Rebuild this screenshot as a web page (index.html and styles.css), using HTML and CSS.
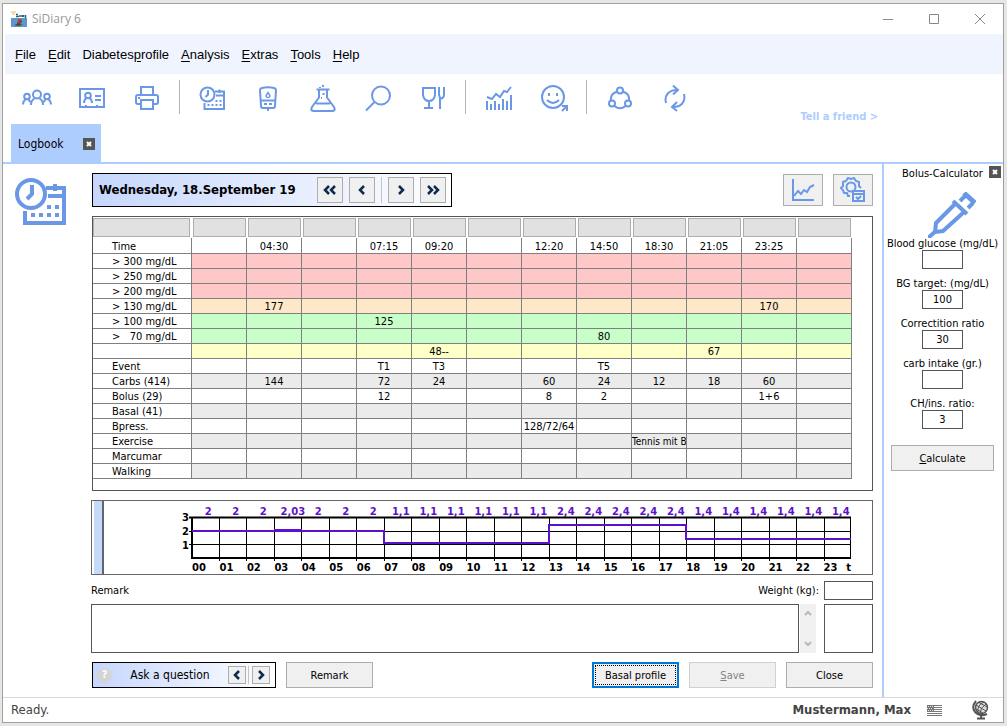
FILE: index.html
```html
<!DOCTYPE html>
<html lang="en">
  <head>
    <meta charset="UTF-8" />
    <meta name="viewport" content="width=device-width, initial-scale=1.0" />
    <title>SiDiary 6</title>
    <link rel="stylesheet" href="styles.css" />
  </head>

  <body>
    <div class="window">
      <header class="titlebar">
        <svg class="app-icon" width="16" height="16" viewBox="0 0 16 16">
          <path d="M0 1h5M1 3h3" stroke="#f5b55e" />
          <path d="M5 3.5h2M5 5.5h3M9 4v2M11 4v2M12.500 4v2M14.500 4v3" stroke="#2b6473" stroke-width="1.500" />
          <rect y="7" width="16" height="9" fill="#5c98cf" />
          <path d="M3 14l3-1 1-4 3-1 1 3-2 2 3 1-5 1z" fill="#4b4a35" />
          <path d="M7 8l3 0-1 4-2 0z" fill="#d8332c" />
        </svg>
        <span class="app-name">SiDiary 6</span>
        <div class="window-buttons">
          <button aria-label="Minimize"><svg width="12" height="12" viewBox="0 0 12 12"><path d="M1 6.500h10" /></svg></button>
          <button aria-label="Maximize"><svg width="12" height="12" viewBox="0 0 12 12"><path d="M1.500 1.500h9v9h-9z" /></svg></button>
          <button aria-label="Close window"><svg width="12" height="12" viewBox="0 0 12 12"><path d="M1 1l10 10M11 1L1 11" /></svg></button>
        </div>
      </header>

      <nav class="menu">
        <a href="#"><u>F</u>ile</a>
        <a href="#"><u>E</u>dit</a>
        <a href="#">Diabetes<u>p</u>rofile</a>
        <a href="#"><u>A</u>nalysis</a>
        <a href="#"><u>E</u>xtras</a>
        <a href="#"><u>T</u>ools</a>
        <a href="#"><u>H</u>elp</a>
      </nav>

      <div class="toolbar">
        <button aria-label="Users">
          <svg width="30" height="18" viewBox="0 0 30 18">
            <circle cx="15" cy="5.500" r="4" />
            <path d="M9 16c0-3 1-5 3.500-6.500M21 16c0-3-1-5-3.500-6.500" />
            <circle cx="5" cy="7.500" r="2.800" />
            <path d="M1 15.500c0-3 1-4 2.500-5M8.500 13.500c-.5-1.500-1-2-2-3" />
            <circle cx="25" cy="7.500" r="2.800" />
            <path d="M29 15.500c0-3-1-4-2.500-5M21.500 13.500c.5-1.500 1-2 2-3" />
          </svg>
        </button>
        <button aria-label="Profile">
          <svg width="26" height="20" viewBox="0 0 26 20">
            <path d="M1 1h24v18H1z" />
            <circle cx="9" cy="7.500" r="2.800" />
            <path d="M5 15c0-3 1-4 2.500-5M13 15c0-3-1-4-2.500-5M16 8h6M16 12h6" />
            <path d="M6 17.500h2M17 17.500h2" stroke-width="1" />
          </svg>
        </button>
        <button aria-label="Print">
          <svg width="24" height="24" viewBox="0 0 24 24">
            <path d="M6 9V1h12v8" />
            <path d="M6 18H3q-2 0-2-2v-5q0-2 2-2h18q2 0 2 2v5q0 2-2 2h-3" />
            <path d="M6 14h12v9H6zM3 12h2" />
          </svg>
        </button>
        <span class="separator"></span>
        <button aria-label="Logbook">
          <svg width="27" height="25" viewBox="0 0 54 50" stroke-width="4">
            <use href="#logbook" />
          </svg>
        </button>
        <button aria-label="Glucose meter">
          <svg width="20" height="25" viewBox="0 0 20 25">
            <path d="M4 2q6-1.500 12 0 2 .5 2 2l-1 16q0 2-2 2H5q-2 0-2-2L2 4q0-1.500 2-2zM2.500 14.500h15M6 18h3M11 18h3M10 22v3" />
            <path d="M10 6.500c-3 4-2 5 0 5s3-1 0-5z" stroke-width="1.500" />
          </svg>
        </button>
        <button aria-label="Laboratory">
          <svg width="26" height="28" viewBox="0 0 26 28">
            <path d="M6.500 5.500h13M9 5.500v8L2 23q-2 4 2 4h18q4 0 2-4l-7-9.500v-8M6 19.500h14" />
            <path d="M13 1v2M10 3v1M13.500 9v2M11 14h1" />
          </svg>
        </button>
        <button aria-label="Search">
          <svg width="26" height="27" viewBox="0 0 26 27">
            <circle cx="16" cy="10.500" r="9" />
            <path d="M9.500 17L1 25.500" />
          </svg>
        </button>
        <button aria-label="Food">
          <svg width="24" height="24" viewBox="0 0 24 24">
            <path d="M2 2h12v7q-1 6-6 6T2 9zM8 15v7M3 22h9M18 1v8q1 2 1 4v10M23 1v8q0 3-4 4" />
          </svg>
        </button>
        <span class="separator"></span>
        <button aria-label="Statistics">
          <svg width="28" height="26" viewBox="0 0 28 26">
            <path d="M2 12l5 2 4-5 4 3 4-6 3 1 4-5" />
            <path d="M2 16v9M6 19v6M10 16v9M14 19v6M18 14v11M22 16v9M26 10v15" />
          </svg>
        </button>
        <button aria-label="Mood">
          <svg width="28" height="28" viewBox="0 0 28 28">
            <circle cx="13" cy="13" r="11" />
            <path d="M7 16q6 6 12 0M9 9v3M17 9v3M22 27l5-5M22 22h5v5" />
          </svg>
        </button>
        <span class="separator"></span>
        <button aria-label="Share">
          <svg width="26" height="24" viewBox="0 0 26 24">
            <circle cx="13" cy="4.500" r="3" />
            <circle cx="5" cy="17.500" r="3" />
            <circle cx="21" cy="17.500" r="3" />
            <path d="M10 5.500Q3 8 4 14.500M16 5.500q7 2.500 6 9M7.500 20q5.500 4.500 11 0" />
          </svg>
        </button>
        <button aria-label="Synchronize">
          <svg width="22" height="28" viewBox="0 0 22 28">
            <path d="M2 19C0 11 5 6 13 6M9 1.500l5 4.500-5 4.500M20 10c2 8-3 13-11 13M13 18l-5 5 5 4" />
          </svg>
        </button>
        <a class="tell" href="#">Tell a friend &gt;</a>
      </div>

      <div class="tabs">
        <div class="tab">
          Logbook
          <button class="close" aria-label="Close tab"><svg width="8" height="8" viewBox="0 0 8 8"><path d="M2 2l4 4M6 2L2 6" /></svg></button>
        </div>
      </div>

      <div class="main">
        <div class="side-icon">
          <svg width="54" height="50" viewBox="0 0 54 50" stroke-width="4">
            <g id="logbook">
              <path d="M32 11h18v35H11V34M34 19h16M41 7v7" />
              <circle cx="17" cy="17" r="14" />
              <path d="M18 8v9l-5 5" />
              <path d="M17 38h28" stroke-dasharray="4 4" />
              <path d="M33 30h12" stroke-dasharray="4 4" />
            </g>
          </svg>
        </div>

        <main class="content">
          <div class="top-row">
            <div class="date-bar">
              <h1>Wednesday, 18.September 19</h1>
              <button class="step" aria-label="Week back"><svg width="14" height="10" viewBox="0 0 14 10"><path d="M6 1L2 5l4 4M12 1L8 5l4 4" /></svg></button>
              <button class="step" aria-label="Day back"><svg width="8" height="10" viewBox="0 0 8 10"><path d="M6 1L2 5l4 4" /></svg></button>
              <span class="divider"></span>
              <button class="step" aria-label="Day forward"><svg width="8" height="10" viewBox="0 0 8 10"><path d="M2 1l4 4-4 4" /></svg></button>
              <button class="step" aria-label="Week forward"><svg width="14" height="10" viewBox="0 0 14 10"><path d="M2 1l4 4-4 4M8 1l4 4-4 4" /></svg></button>
            </div>
            <button class="view" aria-label="Chart">
              <svg width="24" height="24" viewBox="0 0 24 24"><path d="M2 1v21h21" /><path d="M3 18l4-5 3 3 3-4 3 2 3-5 4-2" /></svg>
            </button>
            <button class="view" aria-label="Settings">
              <svg width="26" height="26" viewBox="0 0 26 26">
                <path d="M10 19H8l-1-3-3 0-1-3-2-2 2-2 0-4 3-1 2-3 3 1 3-1 2 3 3 1 0 4 2 2" />
                <circle cx="11" cy="10" r="4.500" />
                <path d="M13 14h11v10H13zM13 17h11M16 20l2 2 3-3" />
              </svg>
            </button>
          </div>

          <div class="log-panel">
            <table class="log">
              <thead>
                <tr>
                  <td><div></div></td><td><div></div></td><td><div></div></td><td><div></div></td><td><div></div></td><td><div></div></td><td><div></div></td><td><div></div></td><td><div></div></td><td><div></div></td><td><div></div></td><td><div></div></td><td><div></div></td>
                </tr>
              </thead>
              <tbody>
                <tr class="time"><th>Time</th><td></td><td>04:30</td><td></td><td>07:15</td><td>09:20</td><td></td><td>12:20</td><td>14:50</td><td>18:30</td><td>21:05</td><td>23:25</td><td></td></tr>
                <tr class="red"><th>&gt; 300 mg/dL</th><td></td><td></td><td></td><td></td><td></td><td></td><td></td><td></td><td></td><td></td><td></td><td></td></tr>
                <tr class="red"><th>&gt; 250 mg/dL</th><td></td><td></td><td></td><td></td><td></td><td></td><td></td><td></td><td></td><td></td><td></td><td></td></tr>
                <tr class="red"><th>&gt; 200 mg/dL</th><td></td><td></td><td></td><td></td><td></td><td></td><td></td><td></td><td></td><td></td><td></td><td></td></tr>
                <tr class="orange"><th>&gt; 130 mg/dL</th><td></td><td>177</td><td></td><td></td><td></td><td></td><td></td><td></td><td></td><td></td><td>170</td><td></td></tr>
                <tr class="green"><th>&gt; 100 mg/dL</th><td></td><td></td><td></td><td>125</td><td></td><td></td><td></td><td></td><td></td><td></td><td></td><td></td></tr>
                <tr class="green"><th>&gt; &nbsp; 70 mg/dL</th><td></td><td></td><td></td><td></td><td></td><td></td><td></td><td>80</td><td></td><td></td><td></td><td></td></tr>
                <tr class="yellow"><th></th><td></td><td></td><td></td><td></td><td>48--</td><td></td><td></td><td></td><td></td><td>67</td><td></td><td></td></tr>
                <tr><th>Event</th><td></td><td></td><td></td><td>T1</td><td>T3</td><td></td><td></td><td>T5</td><td></td><td></td><td></td><td></td></tr>
                <tr class="gray"><th>Carbs (414)</th><td></td><td>144</td><td></td><td>72</td><td>24</td><td></td><td>60</td><td>24</td><td>12</td><td>18</td><td>60</td><td></td></tr>
                <tr><th>Bolus (29)</th><td></td><td></td><td></td><td>12</td><td></td><td></td><td>8</td><td>2</td><td></td><td></td><td>1+6</td><td></td></tr>
                <tr class="gray"><th>Basal (41)</th><td></td><td></td><td></td><td></td><td></td><td></td><td></td><td></td><td></td><td></td><td></td><td></td></tr>
                <tr><th>Bpress.</th><td></td><td></td><td></td><td></td><td></td><td></td><td>128/72/64</td><td></td><td></td><td></td><td></td><td></td></tr>
                <tr class="gray"><th>Exercise</th><td></td><td></td><td></td><td></td><td></td><td></td><td></td><td></td><td class="long">Tennis mit B</td><td></td><td></td><td></td></tr>
                <tr><th>Marcumar</th><td></td><td></td><td></td><td></td><td></td><td></td><td></td><td></td><td></td><td></td><td></td><td></td></tr>
                <tr class="gray"><th>Walking</th><td></td><td></td><td></td><td></td><td></td><td></td><td></td><td></td><td></td><td></td><td></td><td></td></tr>
              </tbody>
            </table>
          </div>

          <div class="basal">
            <div class="handle"></div>
            <div class="scale"><span>3</span><span>2</span><span>1</span></div>
            <div class="chart">
              <div class="rates">
                <span>2</span><span>2</span><span>2</span><span>2,03</span><span>2</span><span>2</span><span>2</span><span>1,1</span><span>1,1</span><span>1,1</span><span>1,1</span><span>1,1</span><span>1,1</span><span>2,4</span><span>2,4</span><span>2,4</span><span>2,4</span><span>2,4</span><span>1,4</span><span>1,4</span><span>1,4</span><span>1,4</span><span>1,4</span><span>1,4</span>
              </div>
              <svg class="plot" viewBox="0 0 660 46" preserveAspectRatio="none">
                <path class="grid" d="M28.500 1v44M55.500 1v44M83.500 1v44M110.500 1v44M138.500 1v44M165.500 1v44M193.500 1v44M220.500 1v44M248.500 1v44M275.500 1v44M303.500 1v44M330.500 1v44M358.500 1v44M385.500 1v44M413.500 1v44M440.500 1v44M468.500 1v44M495.500 1v44M523.500 1v44M550.500 1v44M578.500 1v44M605.500 1v44M633.500 1v44M659.500 1v42M-2 15.500h662M-2 28.500h662" />
                <path class="frame" d="M-2 1.500h662M1 1v42M0 42h660" />
                <path class="rate" d="M1 15h192v12h165V9h137v14h165M83 14h28" />
              </svg>
              <div class="hours">
                <span>00</span><span>01</span><span>02</span><span>03</span><span>04</span><span>05</span><span>06</span><span>07</span><span>08</span><span>09</span><span>10</span><span>11</span><span>12</span><span>13</span><span>14</span><span>15</span><span>16</span><span>17</span><span>18</span><span>19</span><span>20</span><span>21</span><span>22</span><span class="last">23 <i>t</i></span>
              </div>
            </div>
          </div>

          <div class="remark-head">
            <label for="remark">Remark</label>
            <label class="weight-label" for="weight">Weight (kg):</label>
            <input id="weight" type="text" />
          </div>
          <div class="remark-row">
            <textarea id="remark"></textarea>
            <div class="scrollbar">
              <svg width="8" height="6" viewBox="0 0 8 6"><path d="M1 5l3-3 3 3" /></svg>
              <svg width="8" height="6" viewBox="0 0 8 6"><path d="M1 1l3 3 3-3" /></svg>
            </div>
            <div class="preview"></div>
          </div>

          <div class="actions">
            <div class="ask">
              <span class="help">?</span>
              <span class="ask-text">Ask a question</span>
              <button class="step" aria-label="Previous question"><svg width="8" height="10" viewBox="0 0 8 10"><path d="M6 1L2 5l4 4" /></svg></button>
              <span class="divider"></span>
              <button class="step" aria-label="Next question"><svg width="8" height="10" viewBox="0 0 8 10"><path d="M2 1l4 4-4 4" /></svg></button>
            </div>
            <button class="btn">Remark</button>
            <button class="btn default">Basal profile</button>
            <button class="btn" disabled><u>S</u>ave</button>
            <button class="btn">Close</button>
          </div>
        </main>

        <aside class="bolus">
          <button class="close" aria-label="Close calculator"><svg width="8" height="8" viewBox="0 0 8 8"><path d="M2 2l4 4M6 2L2 6" /></svg></button>
          <h2>Bolus-Calculator</h2>
          <svg class="syringe" width="48" height="46" viewBox="0 0 48 46">
            <path d="M27 12L8 31l-1 9 8-1 21-19" stroke-width="4" />
            <path d="M0 46l8-7M32 9l5-5M40 16l5-5" stroke-width="4" />
            <path d="M25 9l14 13" stroke-width="4" />
            <path d="M36 1l11 10" stroke-width="5" />
          </svg>
          <label for="bg">Blood glucose (mg/dL)</label>
          <input id="bg" type="text" />
          <label for="target">BG target: (mg/dL)</label>
          <input id="target" type="text" value="100" />
          <label for="correction">Correctition ratio</label>
          <input id="correction" type="text" value="30" />
          <label for="carbs">carb intake (gr.)</label>
          <input id="carbs" type="text" />
          <label for="ratio">CH/ins. ratio:</label>
          <input id="ratio" type="text" value="3" />
          <button class="btn"><u>C</u>alculate</button>
        </aside>
      </div>

      <footer class="status">
        <span>Ready.</span>
        <strong>Mustermann, Max</strong>
        <svg class="flag" width="15" height="11" viewBox="0 0 15 11">
          <path d="M0 .5h15M0 2.500h15M0 4.500h15M0 6.500h15M0 8.500h15M0 10.500h15" stroke="#777" />
          <path d="M0 0h7v6H0z" fill="#777" />
          <path d="M1 1.500h6M0 3.500h6M1 5.500h6" stroke="#ddd" stroke-dasharray="1 1" />
        </svg>
        <svg class="globe" width="18" height="20" viewBox="0 0 18 20">
          <circle cx="9.500" cy="7.500" r="6" fill="#ddd" stroke-width="1.500" />
          <path d="M4 5l10 6M6 2l9 5M4 9l7 4M12 2Q5 5 6 12M14 4q-6 4-6 9" />
          <path d="M4 1q-5 6-1 11 5 5 12 2M9 15v3M5 18.500h8" stroke-width="2" />
        </svg>
      </footer>
    </div>
  </body>
</html>
```
FILE: styles.css
```css
* {
  box-sizing: border-box;
}

body {
  margin: 0;
  padding: 3px 3px 3px 2px;
  background: #e6e6e6;
  color: #000;
  font: 11px/14px "DejaVu Sans Condensed", "DejaVu Sans", sans-serif;
}

button,
input,
textarea {
  font: inherit;
  color: inherit;
  margin: 0;
  padding: 0;
}

svg {
  display: block;
  fill: none;
  stroke: #6b98e6;
}

a {
  color: inherit;
  text-decoration: none;
}

.window {
  display: flex;
  flex-direction: column;
  min-height: calc(100vh - 6px);
  border: 1px solid #a0a0a0;
  background: #fff;
}

/* title bar and menu */
.titlebar {
  display: flex;
  align-items: center;
  height: 30px;
  padding-left: 8px;
}

.app-icon,
.flag {
  stroke: none;
}

.app-name {
  margin-left: 5px;
  color: #999;
  font: 12px/16px "Open Sans", sans-serif;
}

.window-buttons {
  display: flex;
  margin-left: auto;
}

.window-buttons button {
  display: grid;
  place-items: center;
  width: 46px;
  height: 30px;
  border: 0;
  background: none;
}

.window-buttons svg {
  stroke: #888;
}

.menu {
  display: flex;
  align-items: center;
  gap: 12px;
  height: 40px;
  margin-left: 2px;
  padding: 2px 0 0 10px;
  background: #f0f4ff;
  font: 13px/16px "Liberation Sans", Arial, sans-serif;
}

.menu a {
  text-underline-offset: 2px;
}

/* toolbar */
.toolbar {
  display: flex;
  height: 50px;
  padding: 0 125px 0 6px;
}

.toolbar button {
  display: grid;
  place-items: center;
  width: 55px;
  height: 48px;
  border: 0;
  background: none;
}

.toolbar svg {
  stroke-width: 2;
}

.toolbar svg[stroke-width="4"] {
  stroke-width: 4;
}

.separator {
  width: 1px;
  height: 34px;
  margin: 6px 5px;
  background: #b4b4b4;
}

.tell {
  align-self: flex-end;
  margin-left: auto;
  color: #aecdff;
  font-weight: bold;
}

.tabs {
  display: flex;
  height: 40px;
  padding-left: 8px;
  border-bottom: 2px solid #aecdff;
}

.tab {
  display: flex;
  align-items: center;
  justify-content: space-between;
  width: 90px;
  padding: 2px 6px 0 7px;
  background: #aecdff;
  font-size: 12px;
}

.close {
  display: grid;
  place-items: center;
  width: 12px;
  height: 12px;
  border: 0;
  background: #555;
}

.close svg {
  stroke: #fff;
  stroke-width: 2;
}

/* main area */
.main {
  display: flex;
  flex: 1;
}

.side-icon {
  width: 88px;
  padding: 13px 0 0 11px;
}

.content {
  flex: 1;
  min-width: 0;
  padding: 9px 9px 9px 0;
}

.top-row {
  display: flex;
  align-items: center;
  gap: 10px;
  margin: 0 0 9px 1px;
}

.date-bar,
.ask {
  display: flex;
  align-items: center;
  border: 1px solid #000;
  background: linear-gradient(to right, #c6d6fd, #fff);
}

.date-bar {
  gap: 6px;
  width: 360px;
  height: 34px;
  margin-right: auto;
  padding: 0 5px 0 6px;
}

.date-bar h1 {
  flex: 1;
  margin: 0;
  font-size: 13px;
  white-space: nowrap;
}

.step {
  display: grid;
  place-items: center;
  width: 26px;
  height: 26px;
  border: 1px solid #adadad;
  background: #f0f0f0;
}

.step svg {
  stroke: #0d2a4f;
  stroke-width: 2.5;
}

.divider {
  width: 1px;
  height: 26px;
  background: #c4c4c4;
}

.view {
  display: grid;
  place-items: center;
  width: 40px;
  height: 32px;
  border: 1px solid #adadad;
  background: #f0f0f0;
}

.view svg {
  stroke-width: 2;
}

.log-panel {
  height: 275px;
  margin: 0 0 9px 1px;
  border: 1px solid #555;
}

.log {
  width: 759px;
  table-layout: fixed;
  border-collapse: separate;
  border-spacing: 0;
}

.log td,
.log th {
  width: 55px;
  height: 15px;
  padding: 2px 0 0;
  overflow: hidden;
  border-right: 1px solid #808080;
  border-bottom: 1px solid #808080;
  line-height: 12px;
  text-align: center;
  white-space: nowrap;
}

.log th {
  padding-left: 19px;
  background: #fff;
  font-weight: normal;
  text-align: left;
}

.log thead td {
  height: 21px;
  padding: 1px 0 1px 1px;
  border: 0;
}

.log thead td:first-child {
  width: 99px;
  padding: 1px 1px 1px 0;
}

.log thead div {
  height: 19px;
  margin-right: 1px;
  border: 1px solid #adadad;
  background: #e1e1e1;
}

.log .time td,
.log .time th {
  height: 16px;
}

.log .long {
  font-size: 10px;
  text-align: left;
}

.red {
  background: #ffc8c8;
}

.orange {
  background: #ffe8c8;
}

.green {
  background: #c8ffc8;
}

.yellow {
  background: #ffffc8;
}

.gray {
  background: #ebebeb;
}

/* basal rate chart */
.basal {
  display: flex;
  height: 75px;
  padding: 0 21px 0 2px;
  border: 1px solid #666;
  font: bold 10px/14px "DejaVu Sans", sans-serif;
}

.handle {
  width: 10px;
  border-right: 2px solid #5f6670;
  background: #c4daf8;
}

.scale {
  display: flex;
  flex-direction: column;
  width: 87px;
  padding: 10px 2px 0 0;
  text-align: right;
}

.chart {
  flex: 1;
  min-width: 0;
}

.rates,
.hours {
  display: grid;
  grid-template-columns: repeat(24, minmax(0, 1fr));
}

.rates {
  height: 15px;
  padding-top: 4px;
  color: #5c12cc;
}

.rates span {
  padding-left: 7px;
  text-align: center;
  white-space: nowrap;
}

.plot {
  width: 100%;
  height: 46px;
  overflow: visible;
}

.grid {
  stroke: #000;
}

.frame {
  stroke: #000;
  stroke-width: 2;
}

.rate {
  stroke: #5c12cc;
  stroke-width: 2;
}

.hours {
  padding-left: 1px;
  line-height: 12px;
}

.hours .last {
  display: flex;
  justify-content: space-between;
}

.hours i {
  font-style: normal;
}

/* remark */
.remark-head {
  display: flex;
  align-items: center;
  margin-top: 6px;
}

.weight-label {
  margin: 0 5px 0 auto;
}

input {
  height: 19px;
  border: 1px solid #555;
  border-radius: 0;
  background: #fff;
}

.remark-head input,
.preview {
  width: 49px;
}

.remark-row {
  display: flex;
  height: 49px;
  margin-top: 4px;
}

.remark-row textarea {
  flex: 1;
  padding: 2px;
  overflow: hidden;
  border: 1px solid #555;
  background: #fff;
  resize: none;
}

.scrollbar {
  display: flex;
  flex-direction: column;
  align-items: center;
  justify-content: space-between;
  width: 16px;
  margin: 0 8px 0 1px;
  padding: 6px 0;
  background: #f0f0f0;
}

.scrollbar svg {
  stroke: #b8b8b8;
  stroke-width: 2;
}

.preview {
  border: 1px solid #555;
}

.actions {
  display: flex;
  gap: 10px;
  margin: 9px 0 0 1px;
}

.ask {
  width: 184px;
  height: 26px;
  padding: 0 5px 0 4px;
}

.help {
  width: 15px;
  height: 15px;
  border-radius: 50%;
  background: #d4d4d4;
  color: #fff;
  font-weight: bold;
  text-align: center;
}

.ask-text {
  flex: 1;
  font-size: 12px;
  text-align: center;
}

.ask .step {
  width: 18px;
  height: 18px;
}

.ask .divider {
  height: 18px;
  margin: 0 3px 0 2px;
}

.btn {
  width: 87px;
  height: 26px;
  padding-top: 2px;
  border: 1px solid #adadad;
  background: #f0f0f0;
}

.btn:disabled {
  border-color: #d0d0d0;
  color: #838383;
}

.default {
  margin-left: auto;
  border: 2px solid #0078d7;
  outline: 1px dotted #000;
  outline-offset: -4px;
}

/* bolus calculator */
.bolus {
  position: relative;
  display: flex;
  flex-direction: column;
  align-items: center;
  width: 121px;
  padding: 3px 2px 0 0;
  border-left: 2px solid #aecdff;
  white-space: nowrap;
}

.bolus h2 {
  margin: 0;
  font-size: 11px;
  font-weight: normal;
}

.bolus .close {
  position: absolute;
  top: 2px;
  right: 2px;
}

.syringe {
  margin: 11px 0 -1px 18px;
}

.bolus input {
  width: 41px;
  margin: -1px 0 8px;
  text-align: center;
}

.bolus .btn {
  width: 103px;
  margin-top: 8px;
}

.status {
  display: flex;
  align-items: center;
  height: 25px;
  padding: 0 13px 0 8px;
  border-top: 1px solid #d9d9d9;
  color: #444;
  font-size: 13px;
}

.status strong {
  margin-left: auto;
}

.flag {
  margin: 0 30px 0 16px;
}

.globe {
  stroke: #555;
}
```
